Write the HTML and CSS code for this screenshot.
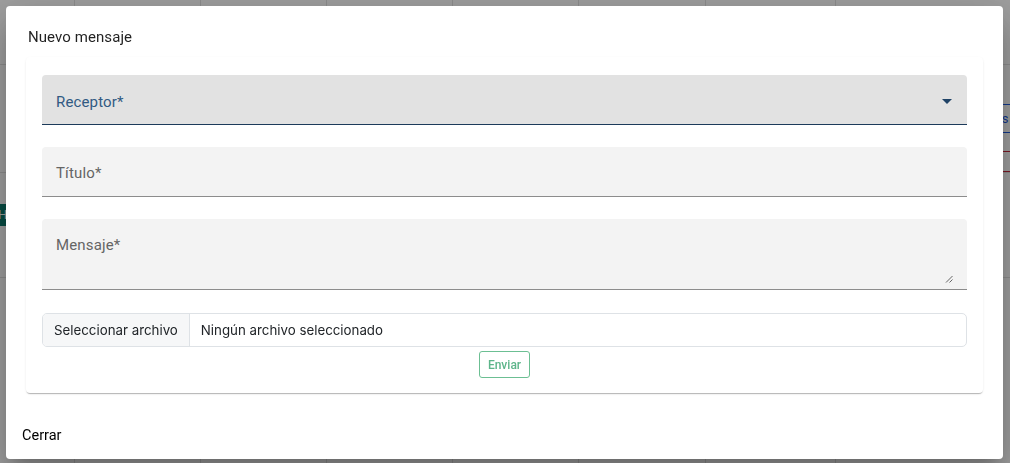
FILE: index.html
```html
<!DOCTYPE html>
<html lang="es">

<head>
    <meta charset="UTF-8">
    <meta name="viewport" content="width=device-width, initial-scale=1.0">
    <title>Mensajes</title>
    <link rel="stylesheet" href="styles.css">
</head>

<body>
    <div class="page">
        <table class="grid">
            <colgroup>
                <col style="width: 74px">
                <col style="width: 126px">
                <col style="width: 126px">
                <col style="width: 126px">
                <col style="width: 126px">
                <col style="width: 127px">
                <col style="width: 130px">
                <col>
            </colgroup>
            <tr class="row-head">
                <th></th><th></th><th></th><th></th><th></th><th></th><th></th><th></th>
            </tr>
            <tr class="row-a">
                <td></td><td></td><td></td><td></td><td></td><td></td><td></td>
                <td class="cell-actions">
                    <span class="btn-line btn-blue">ns</span>
                    <span class="btn-line btn-red"></span>
                </td>
            </tr>
            <tr class="row-b">
                <td class="cell-tag"><span class="tag">Ho</span></td>
                <td></td><td></td><td></td><td></td><td></td><td></td><td></td>
            </tr>
            <tr class="row-c">
                <td></td><td></td><td></td><td></td><td></td><td></td><td></td><td></td>
            </tr>
        </table>
    </div>

    <div class="backdrop">
        <div class="dialog">
            <h2 class="dialog-title">Nuevo mensaje</h2>

            <form class="card">
                <div class="field field-select">
                    <span class="field-label">Receptor*</span>
                    <svg class="arrow" viewBox="0 0 24 24" width="24" height="24">
                        <path d="M7 10l5 5 5-5z"></path>
                    </svg>
                </div>

                <div class="field">
                    <span class="field-label">Título*</span>
                </div>

                <div class="field field-area">
                    <span class="field-label">Mensaje*</span>
                    <svg class="grip" viewBox="0 0 8 8" width="8" height="8">
                        <path d="M1 7.5L7.5 1M4.5 7.5L7.5 4.5"></path>
                    </svg>
                </div>

                <div class="file">
                    <span class="file-btn">Seleccionar archivo</span>
                    <span class="file-name">Ningún archivo seleccionado</span>
                </div>

                <div class="actions">
                    <button type="submit" class="send" disabled>Enviar</button>
                </div>
            </form>

            <div class="dialog-actions">
                <button type="button" class="close">Cerrar</button>
            </div>
        </div>
    </div>
</body>

</html>
```

FILE: styles.css
```css
body {
    margin: 0;
    padding: 0;
    font-family: Roboto, "Liberation Sans", sans-serif;
    background-color: #fff;
    overflow: hidden;
}

/* table behind the dialog */
.page {
    width: 1010px;
    height: 463px;
}

.grid {
    width: 100%;
    border-collapse: collapse;
    table-layout: fixed;
}

.grid th,
.grid td {
    border-left: 1px solid #e2e2e2;
    border-bottom: 1px solid #e2e2e2;
    padding: 0;
}

.grid th:first-child,
.grid td:first-child {
    border-left: none;
}

.row-head {
    height: 64px;
}

.row-a {
    height: 104px;
}

.row-b {
    height: 105px;
}

.row-c {
    height: 190px;
}

.cell-actions {
    vertical-align: top;
    padding: 39px 0 0 156px !important;
}

.btn-line {
    display: block;
    box-sizing: border-box;
    width: 80px;
    border: 1px solid;
    border-radius: 3px;
}

.btn-blue {
    height: 29px;
    padding-left: 2px;
    color: #1e5be0;
    border-color: #1e5be0;
    font-size: 13px;
    line-height: 27px;
}

.btn-red {
    height: 21px;
    margin-top: 18px;
    border-color: #c8283c;
}

.cell-tag {
    vertical-align: top;
    padding: 31px 0 0 0 !important;
}

.tag {
    display: inline-block;
    margin-left: -4px;
    padding: 0 6px 0 2px;
    background-color: #0c7b6c;
    color: #fff;
    font-size: 13px;
    line-height: 22px;
}

/* overlay + dialog */
.backdrop {
    position: fixed;
    inset: 0;
    background-color: rgba(0, 0, 0, 0.38);
}

.dialog {
    display: flex;
    flex-direction: column;
    width: 997px;
    height: 453px;
    margin: 6px 0 0 6px;
    background-color: #fff;
    border-radius: 4px;
    box-shadow: 0 11px 15px -7px rgba(0, 0, 0, 0.2), 0 24px 38px 3px rgba(0, 0, 0, 0.14), 0 9px 46px 8px rgba(0, 0, 0, 0.12);
}

.dialog-title {
    margin: 0;
    padding: 21px 22px 0;
    font-size: 15px;
    font-weight: 400;
    line-height: 20px;
    color: rgba(0, 0, 0, 0.87);
    letter-spacing: 0.005em;
}

.card {
    margin: 10px 20px 0;
    padding: 18px 16px 15px;
    background-color: #fff;
    border-radius: 4px;
    box-shadow: 0 2px 1px -1px rgba(0, 0, 0, 0.2), 0 1px 1px 0 rgba(0, 0, 0, 0.08), 0 1px 3px 0 rgba(0, 0, 0, 0.06);
}

.field {
    position: relative;
    box-sizing: border-box;
    height: 50px;
    margin-bottom: 22px;
    background-color: #f3f3f3;
    border-bottom: 1px solid #8c8c8c;
    border-radius: 4px 4px 0 0;
}

.field-label {
    display: block;
    padding: 16px 0 0 14px;
    font-size: 15px;
    line-height: 20px;
    letter-spacing: 0.01em;
    color: #656565;
}

.field-select {
    background-color: #e2e2e2;
    border-bottom-color: #1c3a5a;
}

.field-select .field-label {
    padding-top: 17px;
    color: #315a82;
}

.arrow {
    position: absolute;
    right: 8px;
    top: 14px;
    fill: #1f4266;
}

.field-area {
    height: 71px;
    margin-bottom: 23px;
}

.field-area .field-label {
    padding-top: 16px;
}

.grip {
    position: absolute;
    right: 14px;
    bottom: 6px;
    stroke: #555;
    stroke-width: 0.9;
    fill: none;
}

.file {
    display: flex;
    box-sizing: border-box;
    height: 34px;
    border: 1px solid #dee2e6;
    border-radius: 5px;
    overflow: hidden;
    font-family: Inter, Roboto, sans-serif;
    font-size: 13.3px;
    color: #212529;
}

.file-btn {
    padding: 0 11px;
    line-height: 32px;
    background-color: #f6f7f8;
    border-right: 1px solid #dee2e6;
}

.file-name {
    padding: 0 11px;
    line-height: 32px;
}

.actions {
    display: flex;
    justify-content: center;
    margin-top: 4px;
}

.send {
    box-sizing: border-box;
    height: 27px;
    width: 51px;
    padding: 0;
    background-color: #fff;
    border: 1px solid #6cbf93;
    border-radius: 3px;
    color: #5db58a;
    font-family: Roboto, sans-serif;
    font-size: 12px;
    font-weight: 500;
}

.dialog-actions {
    margin-top: auto;
    padding: 0 16px 13px;
}

.close {
    padding: 0;
    border: none;
    background: none;
    font-family: Roboto, sans-serif;
    font-size: 14.5px;
    line-height: 20px;
    color: #000;
}
```
